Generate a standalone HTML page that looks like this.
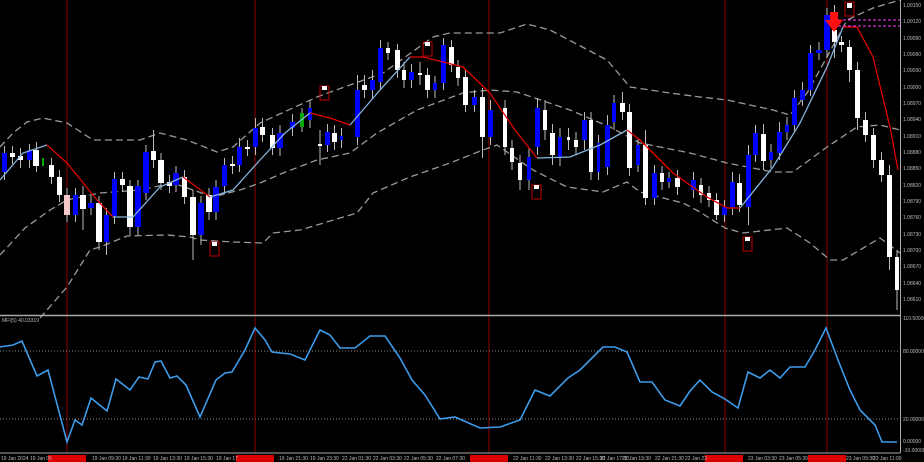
<!DOCTYPE html>
<html><head><meta charset="utf-8"><style>
html,body{margin:0;padding:0;background:#000;}
svg{display:block;font-family:"Liberation Sans",sans-serif;}
</style></head><body>
<svg width="924" height="462" viewBox="0 0 924 462" xmlns="http://www.w3.org/2000/svg">
<rect width="924" height="462" fill="#000"/>
<g stroke="#8b0000" stroke-width="1">
<line x1="67" y1="0" x2="67" y2="453"/><line x1="255" y1="0" x2="255" y2="453"/>
<line x1="489" y1="0" x2="489" y2="453"/><line x1="725" y1="0" x2="725" y2="453"/>
<line x1="827" y1="0" x2="827" y2="453"/>
</g>
<g fill="none" stroke="#9a9a9a" stroke-width="1.3" stroke-dasharray="7,4">
<polyline points="0,147 13,133 27,122 43,118 67,123 93,140 140,140 160,133 187,140 217,152 233,147 260,123 317,97 383,73 433,37 450,33 500,33 527,24 550,30 607,60 630,87 670,93 700,97 727,100 773,110 790,115 807,93 827,57 847,20 873,8 900,0"/>
<polyline points="0,255 25,228 50,210 67,200 100,193 140,190 173,183 213,197 240,190 260,183 283,173 317,160 350,153 377,133 417,110 463,93 490,90 517,92 570,110 610,127 640,143 690,153 727,163 773,172 793,172 827,147 857,127 880,125 900,130"/>
<polyline points="40,318 67,287 90,250 100,247 127,236 167,235 190,237 200,240 233,242 263,243 273,233 300,230 357,213 373,193 410,177 450,163 483,150 497,145 533,170 567,187 603,192 627,182 640,192 683,203 700,212 725,228 743,233 787,228 810,243 830,260 843,260 880,238 900,253"/>
</g>
<g stroke="#bbb" stroke-width="1">
<line x1="4.5" y1="146" x2="4.5" y2="180"/><line x1="12.5" y1="146" x2="12.5" y2="164"/><line x1="20.5" y1="148" x2="20.5" y2="168"/><line x1="29.5" y1="144" x2="29.5" y2="168"/><line x1="36.5" y1="142" x2="36.5" y2="172"/><line x1="51.5" y1="158" x2="51.5" y2="184"/><line x1="59.5" y1="170" x2="59.5" y2="202"/><line x1="67" y1="188" x2="67" y2="222"/><line x1="75.5" y1="188" x2="75.5" y2="222"/><line x1="83" y1="186" x2="83" y2="230"/><line x1="91" y1="196" x2="91" y2="215"/><line x1="99" y1="196" x2="99" y2="250"/><line x1="106.5" y1="208" x2="106.5" y2="255"/><line x1="114.5" y1="172" x2="114.5" y2="224"/><line x1="122.5" y1="172" x2="122.5" y2="192"/><line x1="130" y1="180" x2="130" y2="235"/><line x1="138" y1="180" x2="138" y2="235"/><line x1="146" y1="145" x2="146" y2="200"/><line x1="153.5" y1="130" x2="153.5" y2="168"/><line x1="161" y1="153" x2="161" y2="190"/><line x1="169.5" y1="175" x2="169.5" y2="193"/><line x1="176" y1="166" x2="176" y2="192"/><line x1="184.5" y1="170" x2="184.5" y2="204"/><line x1="193" y1="190" x2="193" y2="260"/><line x1="201" y1="196" x2="201" y2="245"/><line x1="209" y1="188" x2="209" y2="220"/><line x1="216" y1="180" x2="216" y2="220"/><line x1="224.5" y1="158" x2="224.5" y2="194"/><line x1="232.5" y1="156" x2="232.5" y2="174"/><line x1="239.5" y1="138" x2="239.5" y2="172"/><line x1="247.5" y1="140" x2="247.5" y2="156"/><line x1="255.5" y1="118" x2="255.5" y2="155"/><line x1="262.5" y1="118" x2="262.5" y2="142"/><line x1="272.5" y1="128" x2="272.5" y2="155"/><line x1="280" y1="125" x2="280" y2="156"/><line x1="292.5" y1="114" x2="292.5" y2="136"/><line x1="302" y1="108" x2="302" y2="132"/><line x1="310" y1="100" x2="310" y2="128"/><line x1="320" y1="130" x2="320" y2="165"/><line x1="327.5" y1="124" x2="327.5" y2="152"/><line x1="334.5" y1="125" x2="334.5" y2="150"/><line x1="341.5" y1="128" x2="341.5" y2="148"/><line x1="357.5" y1="75" x2="357.5" y2="145"/><line x1="364.5" y1="75" x2="364.5" y2="98"/><line x1="372.5" y1="70" x2="372.5" y2="98"/><line x1="380.5" y1="40" x2="380.5" y2="90"/><line x1="388" y1="42" x2="388" y2="60"/><line x1="397.5" y1="44" x2="397.5" y2="78"/><line x1="404" y1="62" x2="404" y2="88"/><line x1="411.5" y1="64" x2="411.5" y2="88"/><line x1="420" y1="62" x2="420" y2="85"/><line x1="427.5" y1="68" x2="427.5" y2="98"/><line x1="435" y1="76" x2="435" y2="98"/><line x1="443.5" y1="38" x2="443.5" y2="90"/><line x1="451.5" y1="40" x2="451.5" y2="72"/><line x1="458" y1="60" x2="458" y2="86"/><line x1="465.5" y1="70" x2="465.5" y2="112"/><line x1="474.5" y1="90" x2="474.5" y2="112"/><line x1="482.5" y1="88" x2="482.5" y2="158"/><line x1="490.5" y1="100" x2="490.5" y2="145"/><line x1="505" y1="100" x2="505" y2="155"/><line x1="512" y1="140" x2="512" y2="170"/><line x1="520" y1="155" x2="520" y2="190"/><line x1="529" y1="148" x2="529" y2="190"/><line x1="537.5" y1="98" x2="537.5" y2="155"/><line x1="545" y1="100" x2="545" y2="140"/><line x1="552.5" y1="124" x2="552.5" y2="165"/><line x1="560" y1="128" x2="560" y2="166"/><line x1="568.5" y1="128" x2="568.5" y2="150"/><line x1="576" y1="132" x2="576" y2="155"/><line x1="584.5" y1="112" x2="584.5" y2="150"/><line x1="591" y1="112" x2="591" y2="180"/><line x1="598.5" y1="135" x2="598.5" y2="180"/><line x1="607.5" y1="115" x2="607.5" y2="175"/><line x1="614" y1="95" x2="614" y2="130"/><line x1="622.5" y1="92" x2="622.5" y2="120"/><line x1="629.5" y1="104" x2="629.5" y2="176"/><line x1="638" y1="138" x2="638" y2="172"/><line x1="645.5" y1="130" x2="645.5" y2="205"/><line x1="654.5" y1="165" x2="654.5" y2="205"/><line x1="662" y1="166" x2="662" y2="190"/><line x1="669" y1="172" x2="669" y2="188"/><line x1="677.5" y1="170" x2="677.5" y2="195"/><line x1="693.5" y1="172" x2="693.5" y2="198"/><line x1="701" y1="178" x2="701" y2="203"/><line x1="709" y1="186" x2="709" y2="207"/><line x1="716.5" y1="193" x2="716.5" y2="220"/><line x1="724.5" y1="200" x2="724.5" y2="222"/><line x1="732.5" y1="172" x2="732.5" y2="215"/><line x1="739.5" y1="174" x2="739.5" y2="212"/><line x1="748.5" y1="145" x2="748.5" y2="225"/><line x1="755.5" y1="125" x2="755.5" y2="162"/><line x1="763.5" y1="124" x2="763.5" y2="170"/><line x1="771" y1="144" x2="771" y2="168"/><line x1="779.5" y1="122" x2="779.5" y2="160"/><line x1="787" y1="117" x2="787" y2="140"/><line x1="794.5" y1="90" x2="794.5" y2="132"/><line x1="802.5" y1="82" x2="802.5" y2="106"/><line x1="810.5" y1="45" x2="810.5" y2="96"/><line x1="819" y1="42" x2="819" y2="60"/><line x1="827" y1="8" x2="827" y2="58"/><line x1="834.5" y1="5" x2="834.5" y2="58"/><line x1="841.5" y1="36" x2="841.5" y2="52"/><line x1="849.5" y1="40" x2="849.5" y2="82"/><line x1="857.5" y1="62" x2="857.5" y2="130"/><line x1="865.5" y1="112" x2="865.5" y2="142"/><line x1="873.5" y1="128" x2="873.5" y2="168"/><line x1="881.5" y1="152" x2="881.5" y2="182"/><line x1="889.5" y1="165" x2="889.5" y2="270"/><line x1="897" y1="250" x2="897" y2="310"/>
</g>
<g fill="#00f">
<rect x="2" y="153" width="5" height="19"/><rect x="27" y="150" width="5" height="10"/><rect x="73" y="195" width="5" height="20"/><rect x="88" y="203" width="6" height="5"/><rect x="104" y="215" width="5" height="27"/><rect x="112" y="179" width="5" height="37"/><rect x="135" y="186" width="6" height="41"/><rect x="143" y="152" width="6" height="41"/><rect x="173" y="173" width="6" height="12"/><rect x="198" y="203" width="6" height="32"/><rect x="213" y="187" width="6" height="25"/><rect x="222" y="165" width="5" height="21"/><rect x="237" y="147" width="5" height="18"/><rect x="253" y="128" width="5" height="19"/><rect x="277" y="133" width="6" height="15"/><rect x="290" y="122" width="5" height="6"/><rect x="308" y="108" width="4" height="12"/><rect x="325" y="132" width="5" height="13"/><rect x="340" y="136" width="3" height="4"/><rect x="355" y="90" width="5" height="47"/><rect x="370" y="80" width="5" height="10"/><rect x="378" y="48" width="5" height="34"/><rect x="409" y="72" width="5" height="8"/><rect x="433" y="83" width="4" height="7"/><rect x="441" y="45" width="5" height="38"/><rect x="472" y="97" width="5" height="8"/><rect x="488" y="110" width="5" height="27"/><rect x="527" y="157" width="4" height="23"/><rect x="535" y="108" width="5" height="39"/><rect x="558" y="137" width="4" height="20"/><rect x="582" y="120" width="5" height="20"/><rect x="597" y="143" width="3" height="29"/><rect x="605" y="125" width="5" height="42"/><rect x="612" y="103" width="4" height="19"/><rect x="636" y="145" width="4" height="20"/><rect x="652" y="173" width="5" height="25"/><rect x="667" y="178" width="4" height="4"/><rect x="691" y="180" width="5" height="10"/><rect x="722" y="207" width="5" height="8"/><rect x="730" y="182" width="5" height="25"/><rect x="746" y="155" width="5" height="52"/><rect x="753" y="133" width="5" height="22"/><rect x="769" y="152" width="4" height="8"/><rect x="777" y="132" width="5" height="21"/><rect x="785" y="125" width="4" height="7"/><rect x="792" y="98" width="5" height="27"/><rect x="800" y="90" width="5" height="10"/><rect x="808" y="53" width="5" height="37"/><rect x="816" y="50" width="6" height="3"/><rect x="824" y="15" width="6" height="35"/>
</g>
<g fill="#fff">
<rect x="10" y="153" width="5" height="4"/><rect x="18" y="156" width="5" height="4"/><rect x="33" y="150" width="6" height="16"/><rect x="49" y="165" width="5" height="12"/><rect x="57" y="177" width="5" height="18"/><rect x="80" y="195" width="6" height="14"/><rect x="96" y="203" width="6" height="39"/><rect x="120" y="179" width="5" height="6"/><rect x="127" y="186" width="6" height="41"/><rect x="151" y="151" width="5" height="9"/><rect x="158" y="160" width="6" height="23"/><rect x="167" y="182" width="5" height="4"/><rect x="182" y="177" width="5" height="20"/><rect x="190" y="197" width="6" height="38"/><rect x="206" y="195" width="6" height="17"/><rect x="230" y="164" width="5" height="2"/><rect x="245" y="147" width="5" height="2"/><rect x="260" y="127" width="5" height="8"/><rect x="270" y="135" width="5" height="13"/><rect x="318" y="144" width="4" height="2"/><rect x="332" y="133" width="5" height="9"/><rect x="362" y="85" width="5" height="5"/><rect x="386" y="48" width="4" height="5"/><rect x="395" y="50" width="5" height="20"/><rect x="402" y="70" width="4" height="10"/><rect x="418" y="73" width="4" height="2"/><rect x="425" y="75" width="5" height="15"/><rect x="449" y="47" width="5" height="18"/><rect x="456" y="67" width="4" height="11"/><rect x="463" y="77" width="5" height="28"/><rect x="480" y="97" width="5" height="40"/><rect x="503" y="108" width="4" height="39"/><rect x="510" y="148" width="4" height="14"/><rect x="518" y="163" width="4" height="17"/><rect x="543" y="110" width="4" height="20"/><rect x="550" y="133" width="5" height="22"/><rect x="567" y="137" width="3" height="3"/><rect x="574" y="140" width="4" height="7"/><rect x="589" y="120" width="4" height="52"/><rect x="620" y="103" width="5" height="9"/><rect x="627" y="112" width="5" height="56"/><rect x="643" y="145" width="5" height="53"/><rect x="660" y="173" width="4" height="9"/><rect x="675" y="178" width="5" height="9"/><rect x="699" y="185" width="4" height="10"/><rect x="707" y="193" width="4" height="7"/><rect x="714" y="200" width="5" height="15"/><rect x="737" y="183" width="5" height="22"/><rect x="761" y="134" width="5" height="27"/><rect x="832" y="30" width="5" height="12"/><rect x="839" y="42" width="5" height="3"/><rect x="847" y="47" width="5" height="23"/><rect x="855" y="70" width="5" height="48"/><rect x="863" y="120" width="5" height="15"/><rect x="871" y="135" width="5" height="25"/><rect x="879" y="160" width="5" height="15"/><rect x="887" y="175" width="5" height="82"/><rect x="895" y="257" width="4" height="33"/>
</g>
<rect x="64" y="195" width="6" height="20" fill="#f4c8c8"/>
<rect x="42" y="158" width="2" height="8" fill="#0a0"/><rect x="300" y="113" width="4" height="14" fill="#0a0"/>
<g fill="none" stroke-width="1.3">
<polyline stroke="#87b5e0" points="0,180 23,153 47,145"/>
<polyline stroke="#e00000" points="47,145 67,163 97,200 113,217"/>
<polyline stroke="#87b5e0" points="113,217 133,217 160,187 183,177"/>
<polyline stroke="#e00000" points="183,177 210,197"/>
<polyline stroke="#87b5e0" points="210,197 233,190 260,160 285,133 310,113"/>
<polyline stroke="#e00000" points="310,113 330,118 350,125"/>
<polyline stroke="#87b5e0" points="350,125 380,90 410,57"/>
<polyline stroke="#e00000" points="410,57 423,57 463,67 490,93 515,130 537,158"/>
<polyline stroke="#87b5e0" points="537,158 570,157 600,145 627,130"/>
<polyline stroke="#e00000" points="627,130 640,140 673,173 707,197 727,208 740,208"/>
<polyline stroke="#87b5e0" points="740,208 773,167 800,123 827,67 843,27"/>
<polyline stroke="#e00000" points="843,27 857,27 873,57 890,127 898,170"/>
</g>
<g stroke="#ff40ff" stroke-width="1" stroke-dasharray="3,2"><line x1="838" y1="20" x2="900" y2="20"/><line x1="838" y1="26" x2="900" y2="26"/></g>
<path d="M830,12 h8 v8 h5 l-9,12 l-9,-12 h5z" fill="#ff1010"/>
<g fill="none" stroke="#c00000" stroke-width="1">
<rect x="320" y="86" width="9" height="14"/><rect x="423" y="42" width="9" height="14"/>
<rect x="532" y="185" width="9" height="14"/><rect x="210" y="242" width="9" height="14"/>
<rect x="743" y="237" width="9" height="14"/><rect x="845" y="2" width="9" height="14"/>
</g>
<g fill="#fff"><rect x="322" y="86" width="5" height="4"/><rect x="425" y="42" width="5" height="4"/><rect x="534" y="185" width="5" height="4"/><rect x="212" y="242" width="5" height="4"/><rect x="745" y="237" width="5" height="4"/><rect x="847" y="3" width="5" height="5"/></g>
<line x1="0" y1="315.5" x2="900" y2="315.5" stroke="#aaa" stroke-width="1.5"/>
<line x1="900.5" y1="0" x2="900.5" y2="453" stroke="#aaa"/>
<text x="2" y="322" fill="#bbb" font-size="5">MFI(5) 40.03319</text>
<g stroke="#888" stroke-dasharray="1,2"><line x1="0" y1="351" x2="900" y2="351"/><line x1="0" y1="419" x2="900" y2="419"/></g>
<polyline fill="none" stroke="#3d9be9" stroke-width="1.6" points="0,347 13,345 22,341 37,376 48,370 67,442 75,420 82,425 91,398 107,411 116,379 130,390 139,377 148,379 155,362 161,361 170,378 177,376 186,385 200,417 216,380 225,373 232,372 245,350 255,328 265,340 272,352 290,354 305,360 320,330 330,335 340,348 355,348 370,336 385,336 400,358 412,380 425,395 440,419 455,417 480,428 500,427 520,420 535,390 550,396 568,378 580,370 592,358 603,347 615,347 627,352 640,382 652,382 665,400 680,406 690,391 700,380 712,392 725,399 738,408 748,372 760,378 770,370 780,378 790,367 805,367 815,350 826,328 838,360 850,390 860,410 875,425 882,442 897,442"/>
<line x1="0" y1="453" x2="900" y2="453" stroke="#aaa"/>
<g fill="#bbb" font-size="5">
<text x="903" y="7">1.09150</text><text x="903" y="23">1.09120</text><text x="903" y="40">1.09090</text><text x="903" y="56">1.09060</text><text x="903" y="72">1.09030</text><text x="903" y="89">1.09000</text><text x="903" y="105">1.08970</text><text x="903" y="121">1.08940</text><text x="903" y="138">1.08910</text><text x="903" y="154">1.08880</text><text x="903" y="170">1.08850</text><text x="903" y="187">1.08820</text><text x="903" y="203">1.08790</text><text x="903" y="219">1.08760</text><text x="903" y="236">1.08730</text><text x="903" y="252">1.08700</text><text x="903" y="268">1.08670</text><text x="903" y="285">1.08640</text><text x="903" y="301">1.08610</text>
<text x="903" y="320">110.50000</text><text x="903" y="353">80.00000</text><text x="903" y="421">20.00000</text><text x="903" y="443">0.00000</text><text x="903" y="452">-10.00000</text>
</g>
<g fill="#d00"><rect x="48" y="455" width="38" height="7"/><rect x="236" y="455" width="38" height="7"/><rect x="470" y="455" width="38" height="7"/><rect x="705" y="455" width="38" height="7"/><rect x="808" y="455" width="38" height="7"/></g>
<g fill="#bbb" font-size="5">
<text x="1" y="460">19 Jan 2024</text><text x="30" y="460">19 Jan 05</text><text x="92" y="460">19 Jan 09:30</text><text x="122" y="460">19 Jan 11:30</text><text x="153" y="460">19 Jan 13:30</text><text x="184" y="460">19 Jan 15:30</text><text x="216" y="460">19 Jan 17</text><text x="279" y="460">19 Jan 21:30</text><text x="310" y="460">19 Jan 23:30</text><text x="342" y="460">22 Jan 01:30</text><text x="373" y="460">22 Jan 03:30</text><text x="404" y="460">22 Jan 05:30</text><text x="436" y="460">22 Jan 07:30</text><text x="513" y="460">22 Jan 11:30</text><text x="545" y="460">22 Jan 13:30</text><text x="576" y="460">22 Jan 15:30</text><text x="600" y="460">22 Jan 17:30</text><text x="622" y="460">22 Jan 19:30</text><text x="655" y="460">22 Jan 21:30</text><text x="685" y="460">22 Jan 23</text><text x="748" y="460">23 Jan 03:30</text><text x="779" y="460">23 Jan 05:30</text><text x="846" y="460">23 Jan 09:30</text><text x="873" y="460">23 Jan 11:00</text>
</g>
</svg>
</body></html>
